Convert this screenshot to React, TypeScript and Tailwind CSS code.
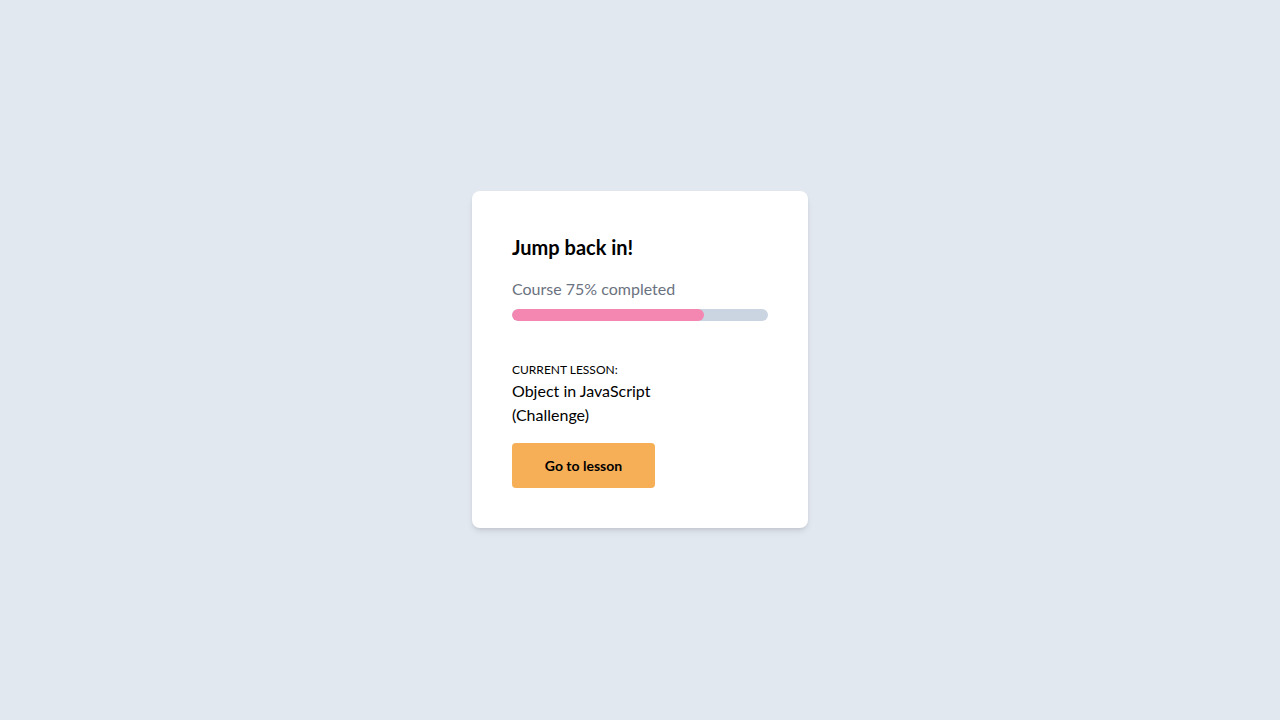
import React from 'react';

const App: React.FC = () => {
  return (
    <div
      className="min-h-screen w-full bg-[#e2e8f0] flex items-center justify-center pb-[1px]"
      style={{ fontFamily: 'Lato, sans-serif' }}
    >
      <div className="w-[336px] bg-white rounded-lg shadow-md px-10 pt-10 pb-10">
        <h2 className="text-xl font-bold text-black leading-7 pt-[2px]">Jump back in!</h2>

        <p className="mt-4 text-base text-[#6b7280] leading-6">Course 75% completed</p>
        <div className="mt-2 h-3 w-full rounded-full bg-[#cbd5e1] overflow-hidden">
          <div className="h-full w-3/4 rounded-full bg-[#f487b2]" />
        </div>

        <p className="mt-[41px] text-xs uppercase text-black leading-4">Current lesson:</p>
        <p className="mt-[1px] w-[160px] text-base text-black leading-6">Object in JavaScript (Challenge)</p>

        <button className="mt-4 h-[45px] w-[143px] rounded bg-[#f6ae57] text-sm font-bold text-black">
          Go to lesson
        </button>
      </div>
    </div>
  );
};

export default App;
